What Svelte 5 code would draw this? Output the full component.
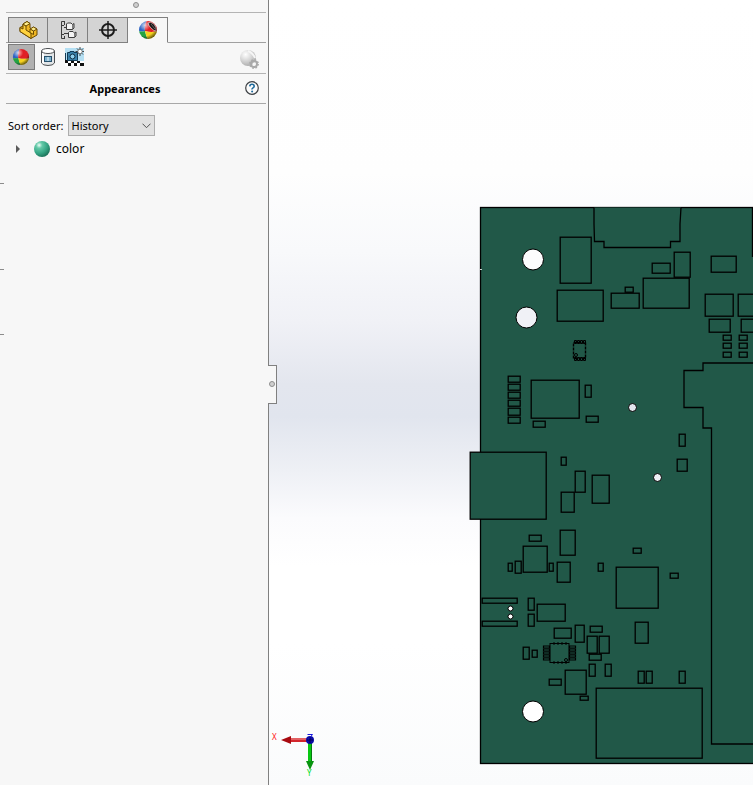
<script>
  let active = $state('appearances');
  let tool = $state('color');
  let order = $state('History');

  // Component outlines on the board: x, y, width, height
  const parts = [
    [560, 237, 31, 46], [557, 290, 46, 31], [652, 263, 18, 10], [674, 252, 16, 25],
    [643, 278, 46, 30], [711, 256, 25, 16], [625, 287, 8, 5], [611, 293, 28, 15],
    [705, 294, 28, 22], [738, 294, 28, 22], [709, 319, 21, 13], [741, 319, 21, 13],
    [723, 335, 8, 5], [723, 343, 8, 5], [723, 352, 8, 5],
    [739, 335, 8, 5], [739, 343, 8, 5], [739, 352, 8, 5],
    [508, 376, 12, 6], [508, 384, 12, 6], [508, 392, 12, 6],
    [508, 400, 12, 6], [508, 408, 12, 7], [508, 417, 12, 6],
    [531, 380, 48, 38], [585, 385, 6, 12], [586, 416, 12, 6], [533, 421, 12, 6],
    [470, 452, 76, 67], [561, 457, 5, 8], [575, 471, 10, 21], [561, 492, 13, 20],
    [592, 475, 17, 28], [679, 434, 6, 12], [677, 459, 10, 12],
    [529, 535, 12, 6], [560, 530, 15, 25], [523, 546, 24, 26], [508, 563, 4, 8],
    [515, 561, 6, 12], [549, 563, 4, 8], [557, 562, 13, 20], [598, 563, 5, 8],
    [482, 598, 35, 5], [482, 621, 35, 5], [528, 598, 6, 12], [528, 614, 6, 12],
    [537, 604, 28, 17], [554, 628, 17, 10], [575, 625, 9, 17], [590, 626, 12, 6],
    [587, 636, 10, 17], [599, 636, 10, 17], [589, 654, 12, 6], [523, 647, 6, 12],
    [532, 650, 5, 7], [565, 670, 21, 24], [549, 679, 12, 6], [580, 696, 8, 4],
    [589, 664, 6, 12], [605, 664, 6, 12], [633, 548, 8, 5], [616, 567, 42, 41],
    [670, 573, 8, 5], [635, 622, 13, 21], [638, 671, 6, 12], [646, 671, 6, 12],
    [679, 671, 6, 12], [596, 688, 106, 70]
  ];

  // Drilled holes: centre x, centre y, radius, fill
  const holes = [
    [533, 259.5, 10.5, '#fcfcfd'], [526.5, 317.5, 10.5, '#f0f1f6'], [533, 711.5, 10.5, '#ffffff'],
    [632.5, 407.5, 4, '#e3e6ee'], [657.5, 477.5, 4, '#eef0f5'],
    [510.5, 608.5, 2.5, '#ffffff'], [510.5, 616.5, 2.5, '#ffffff']
  ];
  const pinRows = [646, 649, 652, 655, 658];
  const pinCols = [575, 578, 581, 584];
</script>

{#snippet ball(id)}
  <defs>
    <radialGradient id="shine-{id}" cx="32%" cy="24%" r="78%">
      <stop offset="0" stop-color="#fff" stop-opacity=".75" />
      <stop offset=".4" stop-color="#fff" stop-opacity="0" />
      <stop offset=".75" stop-color="#000" stop-opacity="0" />
      <stop offset="1" stop-color="#000" stop-opacity=".55" />
    </radialGradient>
    <clipPath id="disc-{id}"><circle cx="10" cy="10" r="9" /></clipPath>
  </defs>
  <g clip-path="url(#disc-{id})">
    <path d="M0 0H9Q6 5 7 11Q4 12 0 11Z" fill="#2c62c4" />
    <path d="M9 0H20V11Q13 13 7 11Q6 5 9 0Z" fill="#e01f26" />
    <path d="M0 11Q4 12 7 11Q8 16 10 20H0Z" fill="#24a343" />
    <path d="M7 11Q13 13 20 11V20H10Q8 16 7 11Z" fill="#f5d21f" />
    {#if id === 'tab'}
      <path d="M10 3Q12 1 16 4Q19 8 18 11Q16 11 13 8Q10 5 10 3Z" fill="#1a1414" stroke="#e8d4d4" stroke-width=".7" />
      <path d="M13 4 17 9" stroke="#777" stroke-width=".8" />
    {/if}
  </g>
  <circle cx="10" cy="10" r="9" fill="url(#shine-{id})" />
{/snippet}

<div class="app">
  <aside class="panel">
    <div class="grip"><i class="knob"></i></div>
    <div class="tabs" role="tablist">
      <button class="tab" class:on={active === 'features'} role="tab" aria-selected={active === 'features'} aria-label="Features" onclick={() => (active = 'features')}>
        <svg width="20" height="20" viewBox="0 0 20 20">
          <g stroke="#6b4a00" stroke-width="1" stroke-linejoin="round">
            <path d="M5 4 9 1.500 12 3.500V8L14 9 15 7 19 9V15L13 18.500 2 11.500V7.500L5 6Z" fill="#eeb625" />
            <path d="M5 4 8 6V10L13 13V18.500L2 11.500V7.500L5 9Z" fill="#ffd23e" />
            <path d="M5 4 9 1.500 12 3.500 8 6Z" fill="#ffee8c" />
            <path d="M12 9 15.500 7 19 9 15.500 11Z" fill="#ffee8c" />
            <path d="M12 9V12.500L15.500 14.500V11Z" fill="#ffd23e" />
          </g>
        </svg>
      </button>
      <button class="tab" class:on={active === 'properties'} role="tab" aria-selected={active === 'properties'} aria-label="Properties" onclick={() => (active = 'properties')}>
        <svg width="20" height="20" viewBox="0 0 20 20" fill="none" stroke="#3c3c3c">
          <path d="M3.500 1.500H7M3.500 1.500V18.500H7M3.500 5.500H6M3.500 14.500H6M6.500 1V5M6.500 16V19" />
          <path d="M6 7.500H9M6 13.500H10" />
          <path d="M8.500 4V9.500H14.500V4.500L13 3H9.500Z" fill="#f4f4f4" />
          <path d="M14.500 4.500 16 3.500V8L14.500 9.500" fill="#bbb" />
          <path d="M10.500 12.500V17.500H16.500V13L15 11.500H11.500Z" fill="#f4f4f4" />
          <path d="M16.500 13 18 12V16L16.500 17.500" fill="#bbb" />
        </svg>
      </button>
      <button class="tab" class:on={active === 'dimensions'} role="tab" aria-selected={active === 'dimensions'} aria-label="Dimensions" onclick={() => (active = 'dimensions')}>
        <svg width="20" height="20" viewBox="0 0 20 20" fill="none" stroke="#1c1c1c" stroke-width="2">
          <circle cx="10" cy="10" r="6" />
          <path d="M10 1V19M1 10H19" stroke-width="1.500" />
        </svg>
      </button>
      <button class="tab" class:on={active === 'appearances'} role="tab" aria-selected={active === 'appearances'} aria-label="Appearances" onclick={() => (active = 'appearances')}>
        <svg width="20" height="20" viewBox="0 0 20 20">{@render ball('tab')}</svg>
      </button>
    </div>

    <div class="tools">
      <button class="tool" class:on={tool === 'color'} aria-label="View appearances" onclick={() => (tool = 'color')}>
        <svg width="18" height="18" viewBox="0 0 20 20">{@render ball('tool')}</svg>
      </button>
      <button class="tool" class:on={tool === 'decals'} aria-label="View decals" onclick={() => (tool = 'decals')}>
        <svg width="16" height="20" viewBox="0 0 16 20">
          <path d="M1.500 4V16Q3 18.500 8 18.500T14.500 16V4" fill="#e2e5e7" stroke="#4a4d50" />
          <path d="M2 6H4V17L2 16Z" fill="#fff" />
          <ellipse cx="8" cy="4" rx="6.500" ry="2.500" fill="#fff" stroke="#4a4d50" />
          <rect x="4.500" y="9.500" width="7" height="5" fill="#7fb3d0" stroke="#27506b" />
          <path d="M8 10V14" stroke="#e8f5fb" />
        </svg>
      </button>
      <button class="tool" class:on={tool === 'scene'} aria-label="View scene, lights and cameras" onclick={() => (tool = 'scene')}>
        <svg width="20" height="20" viewBox="0 0 20 20">
          <rect x="1" y="1" width="19" height="14" fill="#b4dff3" />
          <rect x="1" y="14" width="19" height="5" fill="#fff" />
          <path d="M1 13H4V16H1ZM7 14H10V16H7ZM13 14H16V16H13ZM4 16H7V19H4ZM10 16H13V19H10ZM16 16H20V19H16Z" fill="#111" />
          <path d="M3.500 5.500H6V4.500H10V5.500H13.500V13.500H3.500Z" fill="#3a83ad" stroke="#123b56" />
          <path d="M1.500 6V13" stroke="#123b56" />
          <circle cx="8.500" cy="9.500" r="2.500" fill="#8ed0ee" stroke="#0d2b3e" />
          <path d="M16 0V9M11.500 4.500H20M13 1.500 19 7.500M19 1.500 13 7.500" stroke="#333" stroke-width=".9" />
          <circle cx="16" cy="4.500" r="2.200" fill="#fff" stroke="#444" stroke-width=".6" />
        </svg>
      </button>
      <button class="tool last" disabled aria-label="Display options">
        <svg width="20" height="20" viewBox="0 0 20 20">
          <defs>
            <radialGradient id="grey" cx="35%" cy="28%" r="75%">
              <stop offset="0" stop-color="#fff" /><stop offset=".5" stop-color="#d8d8d8" /><stop offset="1" stop-color="#adadad" />
            </radialGradient>
          </defs>
          <circle cx="9" cy="9" r="8" fill="url(#grey)" />
          <path d="M9 2Q14 4 16 9" fill="none" stroke="#f5f5f5" stroke-width="2" />
          <circle cx="15" cy="15" r="3" fill="none" stroke="#aaa" stroke-width="2" />
          <circle cx="15" cy="15" r="4.200" fill="none" stroke="#aaa" stroke-dasharray="1.650 1.650" stroke-width="1.500" />
          <circle cx="15" cy="15" r="1.500" fill="#f7f7f7" />
        </svg>
      </button>
    </div>

    <header class="title">
      <h1>Appearances</h1>
      <button class="help" aria-label="Help">
        <svg width="14" height="14" viewBox="0 0 14 14">
          <circle cx="7" cy="7" r="6.300" fill="#fbfbfb" stroke="#3d4145" stroke-width="1.200" />
          <path d="M4.800 5.400Q4.900 3.300 7 3.300T9.200 5.200Q9.200 6.200 8 6.900T7.100 8.600" fill="none" stroke="#1e6a9c" stroke-width="1.600" />
          <circle cx="7.100" cy="10.600" r="1" fill="#1e6a9c" />
        </svg>
      </button>
    </header>

    <div class="sort">
      <label for="order">Sort order:</label>
      <div class="pick">
        <select id="order" bind:value={order}>
          <option>History</option>
          <option>Alphabetical</option>
          <option>Hierarchy</option>
        </select>
        <svg class="chevron" width="9" height="6" viewBox="0 0 9 6" fill="none" stroke="#505050"><path d="M.5 .7 4.500 4.700 8.500 .7" /></svg>
      </div>
    </div>

    <button class="node">
      <svg width="6" height="8" viewBox="0 0 6 8"><path d="M1 0 5 4 1 8Z" fill="#5a5a5a" /></svg>
      <svg width="16" height="16" viewBox="0 0 16 16">
        <defs>
          <radialGradient id="teal" cx="32%" cy="26%" r="78%">
            <stop offset="0" stop-color="#effff8" /><stop offset=".25" stop-color="#63c9a8" />
            <stop offset=".65" stop-color="#35a584" /><stop offset="1" stop-color="#1c7259" />
          </radialGradient>
        </defs>
        <circle cx="8" cy="8" r="8" fill="url(#teal)" />
      </svg>
      <span>color</span>
    </button>

    <svg class="ticks" width="4" height="160" viewBox="0 0 4 160" stroke="#8c8c8c" aria-hidden="true">
      <path d="M0 .5H4M0 86.500H4M0 151.500H4" />
    </svg>
    <button class="handle" aria-label="Collapse panel"><i class="knob"></i></button>
  </aside>

  <main class="view">
    <svg class="scene" width="100%" height="100%" role="img" aria-label="Circuit board model">
      <g transform="translate(-269 0)">
        <g fill="#215848" stroke="#000" stroke-width="1.300">
          <rect x="480.500" y="207.500" width="560" height="556" />
          <g transform="translate(.2 .2)">
            {#each parts as [x, y, w, h]}
              <rect {x} {y} width={w} height={h} />
            {/each}
          </g>
          <path d="M594 207.500V224L594.500 241.500H604V247.500H670.500V241.500H680V224L681 207.500" />
          <path d="M752.500 207V257" fill="none" />
          <path d="M1040 363H703V370.500H684V407.500H703V428H711.500V744H1040Z" />
        </g>

        {#each holes as [cx, cy, r, fill]}
          <circle {cx} {cy} {r} {fill} stroke="#000" />
        {/each}

        <g fill="none" stroke="#000">
          <rect x="573.500" y="342.500" width="12" height="16" stroke-width="1.400" stroke-dasharray="3 1" />
          {#each pinCols as x}
            <path d="M{x - 0.5} 340.500h2v3h-2zM{x - 0.5} 357.500h2v3h-2z" />
          {/each}
          <circle cx="576" cy="355" r="1.500" />
          <rect x="550" y="643.500" width="19" height="19" />
          <path d="M553 643.500H567M553 662.500H567" stroke-width="2" stroke-dasharray="2 2" />
          {#each pinRows as y}
            <path d="M543.500 {y}h6v2h-6zM569.500 {y}h6v2h-6z" stroke-width="1.200" />
          {/each}
          <circle cx="566" cy="660" r="1.500" />
        </g>
        <path d="M480 269.500H482" stroke="#c9d4d0" />

        <rect x="291" y="738" width="17" height="4" fill="#d3262c" />
        <path d="M291 739H308" stroke="#f29a9a" />
        <path d="M281 740 291 736V744Z" fill="#a80a10" />
        <rect x="308" y="742" width="4" height="20" fill="#08c812" />
        <path d="M311.500 742V762" stroke="#067a10" />
        <path d="M306 761H314L310 770Z" fill="#08940f" />
        <circle cx="310" cy="740" r="4" fill="#0a0aa8" />
        <path d="M307.500 734.500H312.500L308 740" fill="none" stroke="#1616e0" />
        <path d="M310 737V743M307 740H313" stroke="#000050" />
        <text x="272" y="740" fill="#f11">X</text>
        <text x="307" y="776" fill="#0d2">Y</text>
      </g>
    </svg>
  </main>
</div>

<style>
  :global(body) { margin: 0; }
  .app {
    display: flex;
    min-height: 100vh;
    font: 11px/16px "Noto Sans", "Open Sans", sans-serif;
    color: #000;
  }
  button, select { font: inherit; color: inherit; }
  button { border: 0; padding: 0; background: none; }
  svg { display: block; flex: none; }
  .panel {
    position: relative;
    box-sizing: border-box;
    flex: 0 0 269px;
    padding: 0 2px 0 6px;
    border-right: 1px solid #808080;
    background: #f7f7f7;
  }
  .knob {
    box-sizing: border-box;
    width: 6px;
    height: 6px;
    border: 1px solid #8e8e8e;
    border-radius: 50%;
    background: #cfcfcf;
  }
  .grip {
    display: flex;
    justify-content: center;
    box-sizing: border-box;
    height: 13px;
    padding-top: 2px;
    border-bottom: 1px solid #b4b4b4;
  }
  .tabs {
    display: flex;
    margin-top: 4px;
    padding-left: 2px;
    box-shadow: inset 0 -1px #a0a0a0;
  }
  .tab {
    display: grid;
    place-items: center;
    box-sizing: border-box;
    width: 40px;
    height: 26px;
    border: solid #808080;
    border-width: 1px 1px 1px 0;
    background: #d4d4d4;
  }
  .tab:first-child { border-left-width: 1px; }
  .tab.on { background: #f7f7f7; border-bottom-color: #f7f7f7; }
  .tools {
    display: flex;
    align-items: center;
    box-sizing: border-box;
    height: 31px;
    padding: 0 4px 2px 2px;
    border-bottom: 1px solid #b4b4b4;
  }
  .tool {
    display: grid;
    place-items: center;
    box-sizing: border-box;
    width: 26px;
    height: 26px;
  }
  .tool.on { padding-right: 1px; width: 27px; border: 1px solid #7c7c7c; background: #b1b1b1; }
  .tool.last { margin-left: auto; padding-top: 4px; }
  .title {
    display: grid;
    grid-template-columns: 28px 1fr 28px;
    align-items: center;
    height: 29px;
    border-bottom: 1px solid #a8a8a8;
  }
  h1 {
    grid-column: 2;
    margin: 0;
    padding-right: 22px;
    font-size: 11px;
    line-height: 16px;
    text-align: center;
  }
  .help { justify-self: center; padding-bottom: 2px; }
  .sort {
    display: flex;
    align-items: center;
    gap: 4px;
    margin-top: 11px;
    padding-left: 2px;
  }
  .pick { display: grid; align-items: center; }
  .pick > * { grid-area: 1 / 1; }
  select {
    appearance: none;
    box-sizing: border-box;
    width: 87px;
    height: 21px;
    padding: 0 20px 0 3px;
    border: 1px solid #adadad;
    border-radius: 0;
    background: #e1e1e1;
  }
  .chevron { justify-self: end; margin-right: 4px; pointer-events: none; }
  .node {
    display: flex;
    align-items: center;
    margin-top: 4px;
    padding-left: 9px;
    font-size: 12px;
    line-height: 17px;
  }
  .node svg + svg { margin: 0 6px 0 13px; }
  .ticks { position: absolute; left: 0; top: 183px; }
  .handle {
    position: absolute;
    z-index: 1;
    top: 365px;
    right: -9px;
    display: grid;
    place-items: center;
    box-sizing: border-box;
    width: 9px;
    height: 39px;
    padding-bottom: 1px;
    border: 1px solid #808080;
    border-left: 0;
    background: #f7f7f7;
  }
  .view {
    position: relative;
    flex: 1;
    min-width: 0;
    overflow: hidden;
    background: linear-gradient(#fff 0, #fefefe 22%, #f8f9fb 32%, #f0f1f6 41%, #e3e6ee 49%, #e1e5ee 53%, #eef0f5 60%, #fbfbfd 66%, #fff 72%, #fff 82%, #fafbfc 100%);
  }
  .scene { position: absolute; inset: 0; }
  .scene text { font-size: 8px; }
</style>
